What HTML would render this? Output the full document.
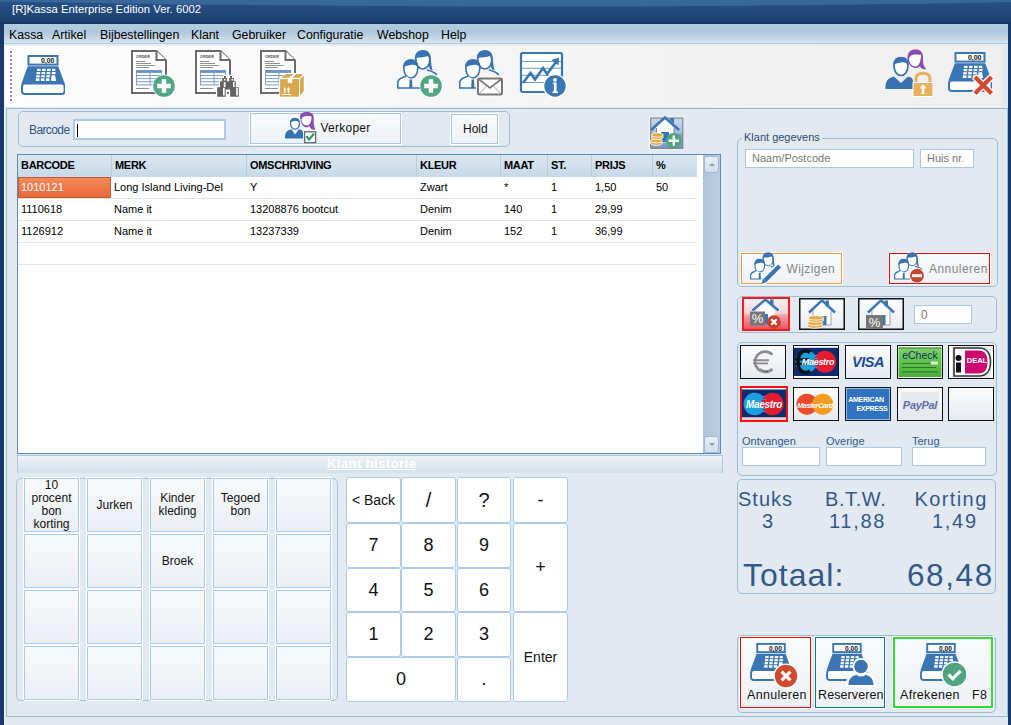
<!DOCTYPE html>
<html><head><meta charset="utf-8">
<style>
*{box-sizing:border-box;margin:0;padding:0}
html,body{width:1011px;height:725px;overflow:hidden;background:#e3e9f1;font-family:"Liberation Sans",sans-serif;position:relative}
.a{position:absolute}
#title{left:0;top:0;width:1011px;height:24px;background:linear-gradient(#28548a 0,#234b7e 8px,#1d4171 21px,#173a6a 23px,#12336a 24px)}
#title span{position:absolute;left:12px;top:3px;color:#fff;font-size:11.3px;}
#lb{left:0;top:24px;width:4px;height:701px;background:#18396a}
#rb{left:1008px;top:24px;width:3px;height:701px;background:#18396a}
#menu{left:4px;top:24px;width:1004px;height:20px;background:linear-gradient(#b3cbdf,#adc7dc 40%,#d5e4ee);border-bottom:1px solid #b2cbdb}
.mi{position:absolute;top:3.6px;font-size:12.3px;color:#000}
#tool{left:4px;top:44px;width:1004px;height:64px;background:linear-gradient(#e6ecf3 0,#e6ecf3 2px,transparent 2px),linear-gradient(90deg,#fdfdfd,#f4f4f4 60%,#efefef 998px,#e3e9f1 998px)}
#tline{left:5px;top:107px;width:1003px;height:1px;background:#e3e9f1}
#wl{left:4px;top:44px;width:1px;height:681px;background:#eef3f8}
#main{left:6px;top:108px;width:1002px;height:609px;border-left:1px solid #93bccc;border-top:1px solid #93bccc;border-bottom:1px solid #93bccc;border-right:1px solid #9ec0d2;background:#e3e9f1}
.grp{position:absolute;border:1px solid #9cbcd6;border-radius:5px}
.btn{position:absolute;background:linear-gradient(#f9fafc,#eef2f6);border:1px solid #a9c8e8;box-shadow:0 0 0 1px #fff}
.kp{position:absolute;background:#fff;border:1px solid #abcaec;border-radius:3px;font-size:18px;color:#111;display:flex;align-items:center;justify-content:center}
.pb{position:absolute;border:1.5px solid #111;background:linear-gradient(#fbfcfd,#e6eaf0)}
.tb{position:absolute;background:#fff;border:1px solid #a9c8e6}
#grid{left:17px;top:154px;width:704px;height:300px;background:#fff;border:1px solid #5a8bbf}
.hd{position:absolute;top:0;height:22px;background:linear-gradient(#dbe7f1,#c7d9e8);border-right:1px solid #b5cde0;font-size:11px;font-weight:bold;padding:4.3px 0 0 3px;letter-spacing:-0.3px;color:#000}
.rw{position:absolute;left:0;width:678px;height:22px;border-bottom:1px solid #dde6ee}
.c{position:absolute;top:4.3px;font-size:11px;color:#000;white-space:nowrap}
.gb{position:absolute;background:linear-gradient(#f9fafc,#eaeff4);border:1px solid #a8caee;box-shadow:0 0 0 1px #fff;font-size:12px;color:#111;display:flex;align-items:center;justify-content:center;text-align:center;line-height:13px;border-radius:1px}
</style></head><body>
<div id="title" class="a"><svg class="a" style="left:0;top:0" width="1011" height="12"><path d="M0,0 H1011 V2 Q550,11.3 0,1.5 Z" fill="#386898"/></svg><span>[R]Kassa Enterprise Edition Ver. 6002</span></div>
<div id="menu" class="a">
<span class="mi" style="left:5px">Kassa</span>
<span class="mi" style="left:48px">Artikel</span>
<span class="mi" style="left:96px">Bijbestellingen</span>
<span class="mi" style="left:187px">Klant</span>
<span class="mi" style="left:228px">Gebruiker</span>
<span class="mi" style="left:293px">Configuratie</span>
<span class="mi" style="left:373px">Webshop</span>
<span class="mi" style="left:437px">Help</span>
</div>
<div id="tool" class="a"></div>
<div id="tline" class="a"></div>
<div id="wl" class="a"></div>
<div id="main" class="a"></div>
<div id="lb" class="a"></div>
<div id="rb" class="a"></div>

<!-- barcode panel -->
<div class="grp" style="left:18px;top:111px;width:492px;height:36px;"></div>
<span class="a" style="left:29px;top:122.5px;font-size:12px;letter-spacing:-0.6px;color:#2d5a85">Barcode</span>
<div class="tb" style="left:73px;top:119px;width:153px;height:21px;border:2px solid #a9c9ec"><div class="a" style="left:2px;top:3px;width:1px;height:13px;background:#000"></div></div>
<div class="btn" style="left:250px;top:113px;width:151px;height:31px;"></div>
<span class="a" style="left:320.5px;top:121px;font-size:12px;letter-spacing:0.25px;color:#111">Verkoper</span>
<div class="btn" style="left:451px;top:114px;width:47px;height:30px;"></div>
<span class="a" style="left:463px;top:122px;font-size:12px;color:#111">Hold</span>

<!-- grid -->
<div id="grid" class="a">
 <div class="hd" style="left:0;width:94px">BARCODE</div>
 <div class="hd" style="left:94px;width:135px">MERK</div>
 <div class="hd" style="left:229px;width:170px">OMSCHRIJVING</div>
 <div class="hd" style="left:399px;width:84px">KLEUR</div>
 <div class="hd" style="left:483px;width:47px">MAAT</div>
 <div class="hd" style="left:530px;width:44px">ST.</div>
 <div class="hd" style="left:574px;width:61px">PRIJS</div>
 <div class="hd" style="left:635px;width:44px;border-right:0">%</div>
 <div class="rw" style="top:22px"><div class="a" style="left:0;top:0;width:93px;height:21px;background:linear-gradient(#f58a5a,#e8693a);border:1px solid #c9582e"></div>
   <span class="c" style="left:3px;color:#fff">1010121</span><span class="c" style="left:96px">Long Island Living-Del</span><span class="c" style="left:232px">Y</span><span class="c" style="left:402px">Zwart</span><span class="c" style="left:486px">*</span><span class="c" style="left:533px">1</span><span class="c" style="left:577px">1,50</span><span class="c" style="left:638px">50</span></div>
 <div class="rw" style="top:44px"><span class="c" style="left:3px">1110618</span><span class="c" style="left:96px">Name it</span><span class="c" style="left:232px">13208876 bootcut</span><span class="c" style="left:402px">Denim</span><span class="c" style="left:486px">140</span><span class="c" style="left:533px">1</span><span class="c" style="left:577px">29,99</span></div>
 <div class="rw" style="top:66px"><span class="c" style="left:3px">1126912</span><span class="c" style="left:96px">Name it</span><span class="c" style="left:232px">13237339</span><span class="c" style="left:402px">Denim</span><span class="c" style="left:486px">152</span><span class="c" style="left:533px">1</span><span class="c" style="left:577px">36,99</span></div>
 <div class="rw" style="top:88px"></div>
 <div class="a" style="left:685px;top:0;width:17px;height:298px;background:linear-gradient(90deg,#adc3d8,#bdd0e0)"></div>
 <div class="a" style="left:686px;top:1px;width:15px;height:17px;border:1px solid #9cb8d2;border-radius:3px;background:linear-gradient(#e9eff5,#d2dfea)"><div class="a" style="left:3.5px;top:6px;width:0;height:0;border-left:3.5px solid transparent;border-right:3.5px solid transparent;border-bottom:3.5px solid #7f9dbd"></div></div>
 <div class="a" style="left:686px;top:281px;width:15px;height:17px;border:1px solid #9cb8d2;border-radius:3px;background:linear-gradient(#e9eff5,#d2dfea)"><div class="a" style="left:3.5px;top:6px;width:0;height:0;border-left:3.5px solid transparent;border-right:3.5px solid transparent;border-top:3.5px solid #7f9dbd"></div></div>
</div>
<div class="a" style="left:17px;top:455px;width:706px;height:18px;background:linear-gradient(#eef3f7,#d2e1eb);border:1px solid #a9c8dc;border-bottom:0"></div>
<span class="a" style="left:327px;top:456px;font-size:13px;font-weight:bold;letter-spacing:0.45px;color:#fff;text-decoration:underline">Klant historie</span>

<!-- article buttons -->
<div class="grp" style="left:16px;top:478px;width:322px;height:223px;border-color:#a8c2d8"></div>
<div class="gb" style="left:24px;top:478px;width:55px;height:54px">10<br>procent<br>bon<br>korting</div>
<div class="gb" style="left:87px;top:478px;width:55px;height:54px">Jurken</div>
<div class="gb" style="left:150px;top:478px;width:55px;height:54px">Kinder<br>kleding</div>
<div class="gb" style="left:213px;top:478px;width:55px;height:54px">Tegoed<br>bon</div>
<div class="gb" style="left:276px;top:478px;width:55px;height:54px"></div>
<div class="gb" style="left:24px;top:534px;width:55px;height:54px"></div>
<div class="gb" style="left:87px;top:534px;width:55px;height:54px"></div>
<div class="gb" style="left:150px;top:534px;width:55px;height:54px">Broek</div>
<div class="gb" style="left:213px;top:534px;width:55px;height:54px"></div>
<div class="gb" style="left:276px;top:534px;width:55px;height:54px"></div>
<div class="gb" style="left:24px;top:590px;width:55px;height:54px"></div>
<div class="gb" style="left:87px;top:590px;width:55px;height:54px"></div>
<div class="gb" style="left:150px;top:590px;width:55px;height:54px"></div>
<div class="gb" style="left:213px;top:590px;width:55px;height:54px"></div>
<div class="gb" style="left:276px;top:590px;width:55px;height:54px"></div>
<div class="gb" style="left:24px;top:646px;width:55px;height:54px"></div>
<div class="gb" style="left:87px;top:646px;width:55px;height:54px"></div>
<div class="gb" style="left:150px;top:646px;width:55px;height:54px"></div>
<div class="gb" style="left:213px;top:646px;width:55px;height:54px"></div>
<div class="gb" style="left:276px;top:646px;width:55px;height:54px"></div>
<div class="kp" style="left:346px;top:477px;width:55px;height:46px;font-size:14px">&lt; Back</div>
<div class="kp" style="left:401px;top:477px;width:55px;height:46px;font-size:20px">/</div>
<div class="kp" style="left:457px;top:477px;width:54px;height:46px;font-size:20px">?</div>
<div class="kp" style="left:513px;top:477px;width:55px;height:46px">-</div>
<div class="kp" style="left:346px;top:523px;width:55px;height:45px">7</div>
<div class="kp" style="left:401px;top:523px;width:55px;height:45px">8</div>
<div class="kp" style="left:457px;top:523px;width:54px;height:45px">9</div>
<div class="kp" style="left:513px;top:523px;width:55px;height:89px">+</div>
<div class="kp" style="left:346px;top:568px;width:55px;height:44px">4</div>
<div class="kp" style="left:401px;top:568px;width:55px;height:44px">5</div>
<div class="kp" style="left:457px;top:568px;width:54px;height:44px">6</div>
<div class="kp" style="left:346px;top:612px;width:55px;height:45px">1</div>
<div class="kp" style="left:401px;top:612px;width:55px;height:45px">2</div>
<div class="kp" style="left:457px;top:612px;width:54px;height:45px">3</div>
<div class="kp" style="left:513px;top:612px;width:55px;height:90px;font-size:14px">Enter</div>
<div class="kp" style="left:346px;top:657px;width:110px;height:45px">0</div>
<div class="kp" style="left:457px;top:657px;width:54px;height:45px">.</div>
<!-- right panel -->
<div class="grp" style="left:737px;top:138px;width:261px;height:149px;"></div>
<span class="a" style="left:742px;top:131px;padding:0 2px;background:#e3e9f1;font-size:11px;color:#2d4d70">Klant gegevens</span>
<div class="tb" style="left:745px;top:149px;width:169px;height:19px;"><span class="a" style="left:6px;top:2px;font-size:11px;color:#777">Naam/Postcode</span></div>
<div class="tb" style="left:920px;top:149px;width:54px;height:19px;"><span class="a" style="left:6px;top:2px;font-size:11px;color:#777">Huis nr.</span></div>
<div class="btn" style="left:741px;top:253px;width:101px;height:31px;border-color:#f0a040"></div>
<span class="a" style="left:786.5px;top:261.5px;font-size:12px;letter-spacing:0.4px;color:#858585">Wijzigen</span>
<div class="btn" style="left:889px;top:253px;width:101px;height:31px;border-color:#ff0000"></div>
<span class="a" style="left:929px;top:261.5px;font-size:12px;color:#858585;letter-spacing:0.45px">Annuleren</span>

<div class="grp" style="left:737px;top:296px;width:260px;height:37px;"></div>
<div class="tb" style="left:914px;top:305px;width:58px;height:19px;"><span class="a" style="left:6px;top:2px;font-size:12px;color:#777">0</span></div>

<div class="grp" style="left:737px;top:342px;width:260px;height:134px;"></div>
<span class="a" style="left:742px;top:435px;font-size:11px;color:#2d5a85">Ontvangen</span>
<span class="a" style="left:826px;top:435px;font-size:11px;color:#2d5a85">Overige</span>
<span class="a" style="left:912px;top:435px;font-size:11px;color:#2d5a85">Terug</span>
<div class="tb" style="left:742px;top:447px;width:78px;height:19px;"></div>
<div class="tb" style="left:826px;top:447px;width:76px;height:19px;"></div>
<div class="tb" style="left:912px;top:447px;width:74px;height:19px;"></div>

<div class="grp" style="left:737px;top:479px;width:259px;height:115px;"></div>
<span class="a" style="left:738px;top:487.5px;font-size:20px;letter-spacing:1px;color:#33598a">Stuks</span>
<span class="a" style="left:762px;top:510px;font-size:20px;color:#33598a">3</span>
<span class="a" style="left:825px;top:487.5px;font-size:20px;letter-spacing:0.6px;color:#33598a">B.T.W.</span>
<span class="a" style="left:829px;top:510px;font-size:20px;letter-spacing:1.7px;color:#33598a">11,88</span>
<span class="a" style="left:914.5px;top:487.5px;font-size:20px;letter-spacing:1.4px;color:#33598a">Korting</span>
<span class="a" style="left:932px;top:510px;font-size:20px;letter-spacing:1.7px;color:#33598a">1,49</span>
<span class="a" style="left:743px;top:557px;font-size:32px;letter-spacing:1px;color:#31598a">Totaal:</span>
<span class="a" style="left:907px;top:556.5px;font-size:31.5px;letter-spacing:1.6px;color:#31598a">68,48</span>

<div class="grp" style="left:737px;top:635px;width:259px;height:78px;"></div>
<div class="btn" style="left:740px;top:637px;width:71px;height:71px;border-color:#ff0000"></div>
<div class="btn" style="left:815px;top:637px;width:70px;height:71px;border-color:#0b7b7b"></div>
<div class="btn" style="left:893px;top:637px;width:100px;height:71px;border-color:#30e030;border-width:2px"></div>
<span class="a" style="left:747px;top:688px;font-size:12.5px;letter-spacing:0.3px;color:#111">Annuleren</span>
<span class="a" style="left:818px;top:688px;font-size:12.5px;letter-spacing:0.1px;color:#111">Reserveren</span>
<span class="a" style="left:900px;top:688px;font-size:12.5px;letter-spacing:0.3px;color:#111">Afrekenen</span><span class="a" style="left:972px;top:688px;font-size:12.5px;letter-spacing:0.3px;color:#111">F8</span>


<!-- toolbar -->
<div class="a" style="left:10px;top:51px;width:2px;height:50px;background:repeating-linear-gradient(#8a8a8a 0 2px,transparent 2px 4px)"></div>
<svg class="a" style="left:21px;top:55px" width="44" height="40" viewBox="0 0 44 40">
  <rect x="7.5" y="1" width="29" height="8.6" fill="#fff" stroke="#3a76b4" stroke-width="2"/>
  <text x="33.5" y="8" font-family="Liberation Sans" font-weight="bold" font-size="7" text-anchor="end" fill="#111">0,00</text>
  <polygon points="6.8,11.2 37.2,11.2 43.8,28.8 0.4,28.8" fill="#3a76b4"/>
  <rect x="1" y="28.6" width="42.6" height="10.4" rx="3" fill="#fff" stroke="#3a76b4" stroke-width="2"/>
  <g fill="#fff">
   <rect x="16" y="13.8" width="3.6" height="2.2"/><rect x="21" y="13.8" width="3.6" height="2.2"/><rect x="26" y="13.8" width="3.6" height="2.2"/><rect x="31" y="13.8" width="3.4" height="2.2"/>
   <rect x="15.6" y="17" width="3.6" height="2.2"/><rect x="20.6" y="17" width="3.6" height="2.2"/><rect x="25.6" y="17" width="3.6" height="2.2"/><rect x="30.8" y="17" width="3.8" height="2.2"/>
   <rect x="15.2" y="20.2" width="3.6" height="2.2"/><rect x="20.2" y="20.2" width="3.6" height="2.2"/><rect x="25.2" y="20.2" width="3.6" height="2.2"/>
   <rect x="14.8" y="23.4" width="3.6" height="2.6"/><rect x="19.8" y="23.4" width="3.6" height="2.6"/><rect x="24.8" y="23.4" width="3.6" height="2.6"/>
   <polygon points="30.4,20.2 34,20.2 35.2,26 30.2,26"/>
  </g>
 </svg>
<svg class="a" style="left:131px;top:50px" width="36" height="44" viewBox="0 0 36 44">
  <path d="M1,1 H25.5 L35,10.5 V43 H1 Z" fill="#fff" stroke="#6b6b6b" stroke-width="2"/>
  <path d="M25.5,1 V10 H35" fill="#fff" stroke="#6b6b6b" stroke-width="2"/>
  <text x="5" y="8" font-family="Liberation Sans" font-weight="bold" font-size="3.6" fill="#444" letter-spacing="0.2">ORDER</text>
  <g fill="#8f8f8f"><rect x="5" y="11" width="9" height="1"/><rect x="5" y="13" width="15" height="1"/><rect x="5" y="15" width="19" height="1"/><rect x="5" y="17" width="13" height="1"/><rect x="5" y="38" width="13" height="1"/></g>
  <rect x="5" y="20" width="26" height="2.6" fill="#6f93c3"/>
  <g fill="none" stroke="#7096c6" stroke-width="0.9"><rect x="5.4" y="22.4" width="25" height="12.5"/><path d="M5.4,25.5 H30.4 M5.4,28.6 H30.4 M5.4,31.7 H30.4 M19,22.4 V34.9"/></g>
 </svg>
<svg class="a" style="left:152px;top:74px" width="24" height="24" viewBox="0 0 24 24">
  <circle cx="12" cy="12" r="11.5" fill="#fff"/>
  <circle cx="12" cy="12" r="10.8" fill="#52a681"/>
  <path d="M9.8,5.2 H14.2 V9.8 H18.8 V14.2 H14.2 V18.8 H9.8 V14.2 H5.2 V9.8 H9.8 Z" fill="#fff"/>
 </svg>
<svg class="a" style="left:195px;top:50px" width="36" height="44" viewBox="0 0 36 44">
  <path d="M1,1 H25.5 L35,10.5 V43 H1 Z" fill="#fff" stroke="#6b6b6b" stroke-width="2"/>
  <path d="M25.5,1 V10 H35" fill="#fff" stroke="#6b6b6b" stroke-width="2"/>
  <text x="5" y="8" font-family="Liberation Sans" font-weight="bold" font-size="3.6" fill="#444" letter-spacing="0.2">ORDER</text>
  <g fill="#8f8f8f"><rect x="5" y="11" width="9" height="1"/><rect x="5" y="13" width="15" height="1"/><rect x="5" y="15" width="19" height="1"/><rect x="5" y="17" width="13" height="1"/><rect x="5" y="38" width="13" height="1"/></g>
  <rect x="5" y="20" width="26" height="2.6" fill="#6f93c3"/>
  <g fill="none" stroke="#7096c6" stroke-width="0.9"><rect x="5.4" y="22.4" width="25" height="12.5"/><path d="M5.4,25.5 H30.4 M5.4,28.6 H30.4 M5.4,31.7 H30.4 M19,22.4 V34.9"/></g>
 </svg>
<svg class="a" style="left:214px;top:73px" width="28" height="26" viewBox="0 0 28 26">
 <path d="M3.2,23.7 V14.25 H6.1 V8.3 H8.2 V5 H10 V3 H11.9 V5 H12.9 V8.3 H15.2 V5 H16 V3 H18 V5 H19.8 V8.3 H21.7 V14.25 H24.8 V23.7 H16.1 V16.6 H11.7 V23.7 Z" fill="#fff" stroke="#fff" stroke-width="2.4"/>
 <path d="M3.2,23.7 V14.25 H6.1 V8.3 H8.2 V5 H10 V3 H11.9 V5 H12.9 V8.3 H15.2 V5 H16 V3 H18 V5 H19.8 V8.3 H21.7 V14.25 H24.8 V23.7 H16.1 V16.6 H11.7 V23.7 Z" fill="#626262"/>
 <g fill="#fff"><rect x="9" y="14.8" width="1.7" height="7.7"/><rect x="9.8" y="9" width="1.7" height="5"/><rect x="10" y="6" width="1.5" height="1.5"/><rect x="22.1" y="14.8" width="1.7" height="7.7"/><rect x="19" y="9" width="1.5" height="5"/><rect x="17.5" y="6" width="1.5" height="1.5"/></g>
</svg>
<svg class="a" style="left:260px;top:50px" width="36" height="44" viewBox="0 0 36 44">
  <path d="M1,1 H25.5 L35,10.5 V43 H1 Z" fill="#fff" stroke="#6b6b6b" stroke-width="2"/>
  <path d="M25.5,1 V10 H35" fill="#fff" stroke="#6b6b6b" stroke-width="2"/>
  <text x="5" y="8" font-family="Liberation Sans" font-weight="bold" font-size="3.6" fill="#444" letter-spacing="0.2">ORDER</text>
  <g fill="#8f8f8f"><rect x="5" y="11" width="9" height="1"/><rect x="5" y="13" width="15" height="1"/><rect x="5" y="15" width="19" height="1"/><rect x="5" y="17" width="13" height="1"/><rect x="5" y="38" width="13" height="1"/></g>
  <rect x="5" y="20" width="26" height="2.6" fill="#6f93c3"/>
  <g fill="none" stroke="#7096c6" stroke-width="0.9"><rect x="5.4" y="22.4" width="25" height="12.5"/><path d="M5.4,25.5 H30.4 M5.4,28.6 H30.4 M5.4,31.7 H30.4 M19,22.4 V34.9"/></g>
 </svg>
<svg class="a" style="left:278px;top:72px" width="28" height="26" viewBox="0 0 28 26">
 <path d="M1.2,24.8 V6.6 L7.5,1 H26.5 V19.5 L22,25.5 Z" fill="#fff"/>
 <g fill="#d9a84e">
 <rect x="2.1" y="7.1" width="18.9" height="17.6"/>
 <polygon points="2.6,5.7 8,2 15.4,2 10.9,5.7"/>
 <polygon points="15,5.7 17.9,2 24.9,2 22,5.7"/>
 <polygon points="22,7.1 25.8,3.5 25.8,19 22,24"/>
 </g>
 <rect x="9.8" y="7" width="4.4" height="3.9" fill="#fff"/>
 <g fill="#fff"><path d="M5,17.5 L6.7,15 L8.4,17.5 H7.4 V21 H6 V17.5 Z"/><path d="M8.8,17.5 L10.5,15 L12.2,17.5 H11.2 V21 H9.8 V17.5 Z"/><rect x="4" y="22" width="9" height="1"/></g>
</svg>
<svg class="a" style="left:394px;top:48px" width="50" height="50" viewBox="0 0 50 50">
 <g transform="translate(13.8,2)">
  <path d="M8,9 C8,3 11,1 15,1 C19,1 22,3 22,9 C22,15 19,19 15,19 C11,19 8,15 8,9 Z" fill="#fff" stroke="#3772b2" stroke-width="1.6"/>
  <path d="M7,10 C6.5,3 10.5,0.3 15,0.3 C20,0.3 23,3.5 23,9 C23.5,14 24,19 25,20 C23,20.5 21.5,19 21,16 C22,12 21.5,8 20,6 C17,7.5 12,7.5 9,7.8 Z" fill="#3772b2"/>
  <path d="M19,20 C24,21 27,22 29,25" fill="none" stroke="#3772b2" stroke-width="1.6"/>
 </g>
 <g transform="translate(2.8,11)">
  <path d="M7,9 C7,3 10,1 14,1 C18,1 21,3 21,9 C21,15 18,19 14,19 C10,19 7,15 7,9 Z" fill="#fff" stroke="#3772b2" stroke-width="1.6"/>
  <path d="M6.4,9 C6,3 10,0.5 14,0.5 C18,0.5 22,3 21.6,9 C20,6 17,5.5 14,6 C10,6.5 8,7 6.4,9 Z" fill="#3772b2"/>
  <path d="M9.5,17 C5,19 1.5,19.5 1,23 V29 H27" fill="#fff" stroke="#3772b2" stroke-width="1.6"/>
  <path d="M12.8,20.5 H15.2 L15.6,29 H12.4 Z" fill="#3772b2"/>
 </g>
</svg>
<svg class="a" style="left:419px;top:74px" width="24" height="24" viewBox="0 0 24 24">
  <circle cx="12" cy="12" r="11.5" fill="#fff"/>
  <circle cx="12" cy="12" r="10.8" fill="#52a681"/>
  <path d="M9.8,5.2 H14.2 V9.8 H18.8 V14.2 H14.2 V18.8 H9.8 V14.2 H5.2 V9.8 H9.8 Z" fill="#fff"/>
 </svg>
<svg class="a" style="left:456px;top:48px" width="50" height="50" viewBox="0 0 50 50">
 <g transform="translate(13.8,2)">
  <path d="M8,9 C8,3 11,1 15,1 C19,1 22,3 22,9 C22,15 19,19 15,19 C11,19 8,15 8,9 Z" fill="#fff" stroke="#3772b2" stroke-width="1.6"/>
  <path d="M7,10 C6.5,3 10.5,0.3 15,0.3 C20,0.3 23,3.5 23,9 C23.5,14 24,19 25,20 C23,20.5 21.5,19 21,16 C22,12 21.5,8 20,6 C17,7.5 12,7.5 9,7.8 Z" fill="#3772b2"/>
  <path d="M19,20 C24,21 27,22 29,25" fill="none" stroke="#3772b2" stroke-width="1.6"/>
 </g>
 <g transform="translate(2.8,11)">
  <path d="M7,9 C7,3 10,1 14,1 C18,1 21,3 21,9 C21,15 18,19 14,19 C10,19 7,15 7,9 Z" fill="#fff" stroke="#3772b2" stroke-width="1.6"/>
  <path d="M6.4,9 C6,3 10,0.5 14,0.5 C18,0.5 22,3 21.6,9 C20,6 17,5.5 14,6 C10,6.5 8,7 6.4,9 Z" fill="#3772b2"/>
  <path d="M9.5,17 C5,19 1.5,19.5 1,23 V29 H27" fill="#fff" stroke="#3772b2" stroke-width="1.6"/>
  <path d="M12.8,20.5 H15.2 L15.6,29 H12.4 Z" fill="#3772b2"/>
 </g>
 <rect x="21.5" y="30" width="25" height="17" rx="1.5" fill="#fff" stroke="#fff" stroke-width="3"/>
 <rect x="22" y="30.5" width="24" height="16" rx="1.5" fill="#fff" stroke="#777" stroke-width="2"/>
 <path d="M22.5,31 L34,40 L45.5,31" fill="none" stroke="#777" stroke-width="1.6"/>
 <path d="M23,46 L30,38.5 M45,46 L38,38.5" fill="none" stroke="#888" stroke-width="0.8"/>
</svg>
<svg class="a" style="left:519px;top:51px" width="50" height="48" viewBox="0 0 50 48">
 <rect x="2" y="2" width="41" height="39" rx="1.5" fill="#fff" stroke="#3a76b4" stroke-width="2.2"/>
 <g fill="#5d8fc4"><rect x="3" y="10" width="39" height="0.9"/><rect x="3" y="16.8" width="39" height="0.9"/><rect x="3" y="23.8" width="39" height="0.9"/><rect x="3" y="31" width="39" height="0.9"/></g>
 <path d="M4,32 L11.5,22 L16,28.5 L24,17 L28,23 L37,11" fill="none" stroke="#3a76b4" stroke-width="2.6" stroke-linejoin="miter"/>
 <path d="M32.5,9 L40,6.5 L39.5,14.5 Z" fill="#3a76b4"/>
 <circle cx="36" cy="35" r="12" fill="#fff"/>
 <circle cx="36" cy="35" r="10.7" fill="#3a76b4"/>
 <circle cx="36" cy="28.8" r="1.9" fill="#fff"/>
 <path d="M34,31.5 H37.6 V40.5 H39 V42 H33.5 V40.5 H34.8 V33 H34 Z" fill="#fff"/>
</svg>
<svg class="a" style="left:884px;top:48px" width="52" height="50" viewBox="0 0 52 50">
 <g transform="translate(-2.5,0)">
 <path d="M26,12 C25.5,4 29,1.5 34,1.5 C39,1.5 42,4 41.5,11 C41.5,15 42,19 45,21 C41,22 39,20 38.5,18 C37,19.5 35.5,20 34,20 C30,20 27,16 26,12 Z" fill="#8a4cb0"/>
 <path d="M27.5,11 C28,8 30,7 33,6.5 C36,6.5 38.5,6 39.5,7 C39.5,13 37.5,18.5 34,18.5 C30.5,18.5 27.5,15 27.5,11 Z" fill="#fff"/>
 </g>
 <g transform="translate(0,6.5)">
 <path d="M10,11 C10,5 13,3 17,3 C21,3 24,5 24,11 C24,17 21,21 17,21 C13,21 10,17 10,11 Z" fill="#fff" stroke="#3772b2" stroke-width="1.7"/>
 <path d="M9.5,11 C9,5 13,2.5 17,2.5 C21,2.5 25,5 24.5,11 C23,8 20,7.5 17,8 C13,8.5 11,9 9.5,11 Z" fill="#3772b2"/>
 </g>
 <path d="M1.5,41 C1,33 4,30 10,28.5 L17,35 L24,28.5 C28,29.5 29,31 29,33 V41 Z" fill="#3772b2"/>
 <path d="M32,35 V31 C32,27 35,25.3 39,25.3 C43,25.3 46,27 46,31 V35" fill="none" stroke="#e8b05c" stroke-width="3"/>
 <rect x="29" y="34.5" width="20" height="14" fill="#e8b05c" stroke="#fff" stroke-width="1"/>
 <path d="M39,37 C40.5,37 41.5,38 41.5,39.3 C41.5,40.3 40.8,41.1 40,41.5 L40.6,46 H37.4 L38,41.5 C37.2,41.1 36.5,40.3 36.5,39.3 C36.5,38 37.5,37 39,37 Z" fill="#fff"/>
</svg>
<svg class="a" style="left:948px;top:52px" width="44" height="40" viewBox="0 0 44 40">
  <rect x="7.5" y="1" width="29" height="8.6" fill="#fff" stroke="#3a76b4" stroke-width="2"/>
  <text x="33.5" y="8" font-family="Liberation Sans" font-weight="bold" font-size="7" text-anchor="end" fill="#111">0,00</text>
  <polygon points="6.8,11.2 37.2,11.2 43.8,28.8 0.4,28.8" fill="#3a76b4"/>
  <rect x="1" y="28.6" width="42.6" height="10.4" rx="3" fill="#fff" stroke="#3a76b4" stroke-width="2"/>
  <g fill="#fff">
   <rect x="16" y="13.8" width="3.6" height="2.2"/><rect x="21" y="13.8" width="3.6" height="2.2"/><rect x="26" y="13.8" width="3.6" height="2.2"/><rect x="31" y="13.8" width="3.4" height="2.2"/>
   <rect x="15.6" y="17" width="3.6" height="2.2"/><rect x="20.6" y="17" width="3.6" height="2.2"/><rect x="25.6" y="17" width="3.6" height="2.2"/><rect x="30.8" y="17" width="3.8" height="2.2"/>
   <rect x="15.2" y="20.2" width="3.6" height="2.2"/><rect x="20.2" y="20.2" width="3.6" height="2.2"/><rect x="25.2" y="20.2" width="3.6" height="2.2"/>
   <rect x="14.8" y="23.4" width="3.6" height="2.6"/><rect x="19.8" y="23.4" width="3.6" height="2.6"/><rect x="24.8" y="23.4" width="3.6" height="2.6"/>
   <polygon points="30.4,20.2 34,20.2 35.2,26 30.2,26"/>
  </g>
 </svg>
<svg class="a" style="left:971px;top:73px" width="24" height="24" viewBox="0 0 24 24">
 <path d="M3.5,3.5 L21,21 M21,3.5 L3.5,21" stroke="#fff" stroke-width="6.8"/>
 <path d="M4,4 L20.5,20.5 M20.5,4 L4,20.5" stroke="#d5492c" stroke-width="4.4"/>
</svg>

<svg class="a" style="left:283px;top:110px" width="36" height="36" viewBox="0 0 36 36">
 <path d="M17,8 C16.5,3.5 19.5,2 24,2 C28.5,2 31,4 30.8,9 C30.5,13 31,16.5 32.3,19.8 C29,20.2 27,18.5 26.5,16 C25.5,17 24.5,17.3 23.5,17.3 C20,17.3 18,13 17.5,9 Z" fill="#8a4cb0"/>
 <path d="M18.5,9.5 C19,6.8 21,6.2 24,6 C26,6.2 28,6 28.5,6.8 C28.5,11.5 27,15.5 24,15.5 C21,15.5 18.5,12.5 18.5,9.5 Z" fill="#fff"/>
 <ellipse cx="12" cy="13.8" rx="4.5" ry="5.4" fill="#fff" stroke="#3772b2" stroke-width="1.3"/>
 <path d="M7.3,13 C7,9 9,8 12,8 C15,8 17,9 16.7,13 C15.5,11 14,10.8 12,11 C10,11.2 8.5,11.5 7.3,13 Z" fill="#3772b2"/>
 <path d="M2,28.6 C1.8,22.5 4,20.5 8.5,19.3 L12,24.5 L15.8,19.3 C19,20 20,21 20,23 V28.6 Z" fill="#3772b2"/>
 <rect x="21.6" y="21.8" width="11" height="10.8" fill="#fff" stroke="#6a6a6a" stroke-width="1.3"/>
 <path d="M23.4,26.2 L26,29.6 L31,23.8" fill="none" stroke="#2a9d63" stroke-width="2.2"/>
</svg>
<svg class="a" style="left:649px;top:116px" width="36" height="34" viewBox="0 0 36 34">
 <defs><linearGradient id="hg" x1="0" y1="0" x2="0" y2="1"><stop offset="0" stop-color="#c9d8ec"/><stop offset="0.5" stop-color="#a3bde0"/><stop offset="0.55" stop-color="#7f9fd0"/><stop offset="1" stop-color="#7d9ccc"/></linearGradient></defs>
 <rect x="0.5" y="0.8" width="34.5" height="32.5" fill="#fff"/>
 <rect x="1.7" y="2" width="32.2" height="30.3" fill="url(#hg)" stroke="#707070" stroke-width="1"/>
 <rect x="21" y="2" width="4" height="6" fill="#3a76b4"/>
 <path d="M6.5,12.5 H7.5 V26.5 H25 V12.5 H26.5 V9 L16.5,0.5 L6.5,9 Z" fill="#fff"/>
 <path d="M2,14 L16,1.5 L30,14" fill="none" stroke="#3a76b4" stroke-width="2.6"/>
 <path d="M7.5,12 V26.5 M25,12 V20" stroke="#666" stroke-width="0.8"/>
 <rect x="12" y="16" width="8" height="10" fill="#3a76b4"/>
 <g fill="#e9a94a" stroke="#fff" stroke-width="0.8"><ellipse cx="7.3" cy="27.2" rx="6" ry="2.2"/><ellipse cx="7.3" cy="24.7" rx="6" ry="2.2"/><ellipse cx="8.3" cy="21.2" rx="6" ry="2.2"/><ellipse cx="8.3" cy="19" rx="6" ry="2.2"/></g>
 <circle cx="24.8" cy="24.7" r="7.8" fill="#4fa57f"/>
 <path d="M23.6,19.6 H26 V23.5 H29.9 V25.9 H26 V29.8 H23.6 V25.9 H19.7 V23.5 H23.6 Z" fill="#fff"/>
</svg>
<!-- discount buttons -->
<svg class="a" style="left:742px;top:297px" width="48" height="34" viewBox="0 0 48 34">
 <defs><linearGradient id="rg" x1="0" y1="0" x2="0" y2="1"><stop offset="0" stop-color="#f8f2f4"/><stop offset="0.5" stop-color="#f0d2d8"/><stop offset="0.52" stop-color="#f0a8b0"/><stop offset="1" stop-color="#e8505e"/></linearGradient></defs>
 <rect x="1" y="1" width="46" height="32" fill="url(#rg)" stroke="#ff1a1a" stroke-width="2"/>
 <rect x="28" y="2.5" width="3.5" height="6" fill="#3a76b4"/>
 <path d="M14,13 V27 H33 V13 L23.5,4.5 Z" fill="#fff" opacity="0.9"/>
 <path d="M10.5,13.5 L23.5,2.5 L36.5,13.5" fill="none" stroke="#3a76b4" stroke-width="2.4"/>
 <rect x="20" y="17" width="6" height="10" fill="#3a76b4"/>
 <rect x="8" y="14.5" width="15" height="14" fill="#777"/>
 <text x="15.5" y="26" font-family="Liberation Sans" font-size="13" text-anchor="middle" fill="#fff">%</text>
 <circle cx="32" cy="25" r="6.8" fill="#c8412c"/>
 <path d="M29.3,22.3 L34.7,27.7 M34.7,22.3 L29.3,27.7" stroke="#fff" stroke-width="2.2"/>
</svg>
<svg class="a" style="left:799px;top:298px" width="46" height="32" viewBox="0 0 46 32">
 <defs><linearGradient id="wg" x1="0" y1="0" x2="0" y2="1"><stop offset="0" stop-color="#fafbfd"/><stop offset="1" stop-color="#e8ecf2"/></linearGradient></defs>
 <rect x="0.75" y="0.75" width="44.5" height="30.5" fill="url(#wg)" stroke="#111" stroke-width="1.5"/>
 <rect x="26.5" y="2.5" width="3.5" height="6" fill="#3a76b4"/>
 <path d="M14,13 V27 H32 V13 L23,4.5 Z" fill="#fff"/>
 <path d="M14,12.5 V27 H32 V12.5" fill="none" stroke="#888" stroke-width="0.8"/>
 <path d="M10,14.5 L23,2.3 L36,14.5" fill="none" stroke="#3a76b4" stroke-width="2.4"/>
 <rect x="21.5" y="18" width="6" height="9" fill="#3a76b4"/>
 <g fill="#e9a94a" stroke="#fff" stroke-width="0.8"><ellipse cx="16" cy="28" rx="8" ry="2.2"/><ellipse cx="16" cy="25.3" rx="8" ry="2.2"/><ellipse cx="17" cy="22" rx="8" ry="2.2"/><ellipse cx="17" cy="19.8" rx="8" ry="2.2"/></g>
</svg>
<svg class="a" style="left:858px;top:298px" width="46" height="32" viewBox="0 0 46 32">
 <rect x="0.75" y="0.75" width="44.5" height="30.5" fill="url(#wg)" stroke="#111" stroke-width="1.5"/>
 <rect x="26.5" y="2.5" width="3.5" height="6" fill="#3a76b4"/>
 <path d="M14,13 V27 H32 V13 L23,4.5 Z" fill="#fff"/>
 <path d="M14,12.5 V27 H32 V12.5" fill="none" stroke="#888" stroke-width="0.8"/>
 <path d="M10,14.5 L23,2.3 L36,14.5" fill="none" stroke="#3a76b4" stroke-width="2.4"/>
 <rect x="21.5" y="17" width="6" height="10" fill="#3a76b4"/>
 <rect x="8" y="17" width="17" height="13.5" fill="#777"/>
 <text x="16.5" y="28.5" font-family="Liberation Sans" font-size="13" text-anchor="middle" fill="#fff">%</text>
</svg>

<svg class="a" style="left:748px;top:250.5px" width="35" height="35" viewBox="0 0 50 50">
 <g transform="translate(13.8,2)">
  <path d="M8,9 C8,3 11,1 15,1 C19,1 22,3 22,9 C22,15 19,19 15,19 C11,19 8,15 8,9 Z" fill="#fff" stroke="#3772b2" stroke-width="1.6"/>
  <path d="M7,10 C6.5,3 10.5,0.3 15,0.3 C20,0.3 23,3.5 23,9 C23.5,14 24,19 25,20 C23,20.5 21.5,19 21,16 C22,12 21.5,8 20,6 C17,7.5 12,7.5 9,7.8 Z" fill="#3772b2"/>
  <path d="M19,20 C24,21 27,22 29,25" fill="none" stroke="#3772b2" stroke-width="1.6"/>
 </g>
 <g transform="translate(2.8,11)">
  <path d="M7,9 C7,3 10,1 14,1 C18,1 21,3 21,9 C21,15 18,19 14,19 C10,19 7,15 7,9 Z" fill="#fff" stroke="#3772b2" stroke-width="1.6"/>
  <path d="M6.4,9 C6,3 10,0.5 14,0.5 C18,0.5 22,3 21.6,9 C20,6 17,5.5 14,6 C10,6.5 8,7 6.4,9 Z" fill="#3772b2"/>
  <path d="M9.5,17 C5,19 1.5,19.5 1,23 V29 H27" fill="#fff" stroke="#3772b2" stroke-width="1.6"/>
  <path d="M12.8,20.5 H15.2 L15.6,29 H12.4 Z" fill="#3772b2"/>
 </g>
</svg>
<svg class="a" style="left:758px;top:262px" width="26" height="24" viewBox="0 0 26 24">
 <path d="M4.5,21 L20.5,5" stroke="#fff" stroke-width="7"/>
 <path d="M7,18.5 L21.5,4" stroke="#3772b2" stroke-width="4.2"/>
 <path d="M3.6,21.6 L5,16.4 L8.8,20.2 Z" fill="#3772b2"/>
</svg>
<svg class="a" style="left:892px;top:250.5px" width="35" height="35" viewBox="0 0 50 50">
 <g transform="translate(13.8,2)">
  <path d="M8,9 C8,3 11,1 15,1 C19,1 22,3 22,9 C22,15 19,19 15,19 C11,19 8,15 8,9 Z" fill="#fff" stroke="#3772b2" stroke-width="1.6"/>
  <path d="M7,10 C6.5,3 10.5,0.3 15,0.3 C20,0.3 23,3.5 23,9 C23.5,14 24,19 25,20 C23,20.5 21.5,19 21,16 C22,12 21.5,8 20,6 C17,7.5 12,7.5 9,7.8 Z" fill="#3772b2"/>
  <path d="M19,20 C24,21 27,22 29,25" fill="none" stroke="#3772b2" stroke-width="1.6"/>
 </g>
 <g transform="translate(2.8,11)">
  <path d="M7,9 C7,3 10,1 14,1 C18,1 21,3 21,9 C21,15 18,19 14,19 C10,19 7,15 7,9 Z" fill="#fff" stroke="#3772b2" stroke-width="1.6"/>
  <path d="M6.4,9 C6,3 10,0.5 14,0.5 C18,0.5 22,3 21.6,9 C20,6 17,5.5 14,6 C10,6.5 8,7 6.4,9 Z" fill="#3772b2"/>
  <path d="M9.5,17 C5,19 1.5,19.5 1,23 V29 H27" fill="#fff" stroke="#3772b2" stroke-width="1.6"/>
  <path d="M12.8,20.5 H15.2 L15.6,29 H12.4 Z" fill="#3772b2"/>
 </g>
</svg>
<svg class="a" style="left:909px;top:268px" width="16" height="16" viewBox="0 0 16 16">
 <circle cx="8" cy="7.7" r="7.6" fill="#fff"/>
 <circle cx="8" cy="7.7" r="6.9" fill="#c8442c"/>
 <rect x="3" y="6.2" width="10" height="3" fill="#fff"/>
</svg>

<!-- payment buttons -->
<div class="pb" style="left:740px;top:345px;width:46px;height:34px"></div>
<svg class="a" style="left:750px;top:349px" width="26" height="26" viewBox="0 0 26 26">
 <path d="M22.4,5.6 A10.2,10.2 0 1 0 22.4,20" fill="none" stroke="#8c8c8c" stroke-width="2.6"/>
 <path d="M10.5,19.5 A8.2,8.2 0 0 0 18,22" fill="none" stroke="#333" stroke-width="1.1" opacity="0.6"/>
 <path d="M3,11.3 H19 M3,14.4 H18" stroke="#8c8c8c" stroke-width="1.9"/>
</svg>
<div class="pb" style="left:793px;top:345px;width:46px;height:34px;background:#fff"></div>
<svg class="a" style="left:794px;top:347px" width="44" height="30" viewBox="0 0 44 30">
 <rect x="0" y="0.8" width="44" height="28.2" fill="#0b2a6f"/>
 <circle cx="12.4" cy="14.7" r="11" fill="#1ba0dd"/>
 <circle cx="31" cy="14.7" r="11" fill="#e31c30"/>
 <g fill="#1ba0dd"><rect x="20" y="8" width="3.5" height="1"/><rect x="20" y="11" width="4" height="1"/><rect x="20" y="17" width="4" height="1"/><rect x="20" y="20" width="3.5" height="1"/></g>
 <path d="M16,5.5 C14.5,4.5 13,4 11.5,4 C7,4 4,8.5 4,14.7 C4,21 7,25.5 11.5,25.5 C13,25.5 14.5,25 16,24" fill="none" stroke="#111" stroke-width="3.4"/><path d="M1,12.3 H15 M1,16.8 H14" stroke="#111" stroke-width="2.2"/>
 <text x="24" y="18" font-family="Liberation Sans" font-weight="bold" font-style="italic" font-size="9" text-anchor="middle" fill="#fff" letter-spacing="-0.3">Maestro</text>
</svg>
<div class="pb" style="left:845px;top:345px;width:46px;height:34px"></div>
<svg class="a" style="left:846px;top:346px" width="44" height="32" viewBox="0 0 44 32">
 <text x="22" y="20.8" font-family="Liberation Sans" font-weight="bold" font-style="italic" font-size="14.5" text-anchor="middle" fill="#1a4b9a" letter-spacing="-0.5">VISA</text>
 <path d="M7,9.8 L9.6,9.8 L10.3,12.5 Z" fill="#f0a020"/>
</svg>
<div class="pb" style="left:897px;top:345px;width:46px;height:34px;background:#fff"></div>
<svg class="a" style="left:898px;top:346px" width="44" height="32" viewBox="0 0 44 32">
 <defs><linearGradient id="eg" x1="0" y1="0" x2="0" y2="1"><stop offset="0" stop-color="#7fd06a"/><stop offset="0.5" stop-color="#5ec24a"/><stop offset="1" stop-color="#48b038"/></linearGradient></defs>
 <rect x="0.5" y="1.5" width="43" height="29.5" fill="url(#eg)"/>
 <rect x="0.5" y="1.5" width="43" height="1" fill="#2e8a2a"/>
 <text x="22" y="13" font-family="Liberation Sans" font-size="10.5" text-anchor="middle" fill="#1a2a6a">eCheck</text>
 <g fill="#1f4a1f" opacity="0.8"><rect x="4" y="17" width="28" height="0.8"/><rect x="4" y="21" width="34" height="0.8"/><rect x="4" y="25.5" width="36" height="0.8"/></g>
 <rect x="33" y="15.5" width="7" height="3" fill="#d8f0d0"/>
</svg>
<div class="pb" style="left:948px;top:345px;width:46px;height:34px;background:#fff"></div>
<svg class="a" style="left:949px;top:346px" width="44" height="32" viewBox="0 0 44 32">
 <rect x="3" y="0" width="39" height="32" fill="#e9e9e9"/>
 <path d="M5,2 H30 C38,2 41.5,8 41.5,16 C41.5,24 38,30 30,30 H5 Z" fill="#fff" stroke="#333" stroke-width="1.6"/>
 <path d="M16,4.5 H29.5 C36,4.5 38.5,9 38.5,16 C38.5,23 36,27.5 29.5,27.5 H16 Z" fill="#cc0a6e"/>
 <circle cx="9.5" cy="12" r="3" fill="#111"/>
 <rect x="7" y="16.5" width="5" height="10" fill="#111"/>
 <text x="28" y="16.5" font-family="Liberation Sans" font-weight="bold" font-size="7.5" text-anchor="middle" fill="#fff">DEAL</text>
</svg>
<div class="pb" style="left:740px;top:386px;width:48px;height:36px;border:2px solid #ff1010;background:#fff"></div>
<svg class="a" style="left:742px;top:388px" width="44" height="32" viewBox="0 0 44 32">
 <rect x="0" y="1.5" width="44" height="28" fill="#0b2a6f"/>
 <rect x="0" y="29.5" width="44" height="2.5" fill="#f5d0d0"/>
 <circle cx="12.8" cy="16" r="11.2" fill="#1ba0dd"/>
 <circle cx="30.4" cy="16" r="11.2" fill="#e31c30"/>
 <g fill="#1ba0dd"><rect x="19.5" y="8" width="4" height="1"/><rect x="19.5" y="11" width="4.5" height="1"/><rect x="19.5" y="20" width="4.5" height="1"/><rect x="19.5" y="23" width="4" height="1"/></g>
 <text x="22" y="19.5" font-family="Liberation Sans" font-weight="bold" font-style="italic" font-size="10" text-anchor="middle" fill="#fff" letter-spacing="-0.3">Maestro</text>
</svg>
<div class="pb" style="left:793px;top:387px;width:46px;height:34px"></div>
<svg class="a" style="left:794px;top:388px" width="44" height="32" viewBox="0 0 44 32">
 <circle cx="13" cy="16.3" r="10.6" fill="#eb4b2b"/>
 <circle cx="28.8" cy="16.3" r="10.6" fill="#f59c1e"/>
 <text x="21" y="19.5" font-family="Liberation Sans" font-weight="bold" font-style="italic" font-size="7.4" text-anchor="middle" fill="#fff" letter-spacing="-0.5">MasterCard</text>
</svg>
<div class="pb" style="left:845px;top:387px;width:46px;height:34px;background:#fff"></div>
<svg class="a" style="left:846px;top:388px" width="44" height="32" viewBox="0 0 44 32">
 <rect x="0.5" y="0.5" width="43" height="31" fill="#2f72be"/>
 <text x="20" y="14" font-family="Liberation Sans" font-weight="bold" font-size="7" text-anchor="middle" fill="#fff" letter-spacing="-0.3">AMERICAN</text>
 <text x="26" y="23" font-family="Liberation Sans" font-weight="bold" font-size="7" text-anchor="middle" fill="#fff" letter-spacing="-0.3">EXPRESS</text>
</svg>
<div class="pb" style="left:897px;top:387px;width:46px;height:34px"></div>
<svg class="a" style="left:898px;top:388px" width="44" height="32" viewBox="0 0 44 32">
 <rect x="3" y="4" width="38" height="25" fill="#e6e9f0"/>
 <text x="22" y="20.5" font-family="Liberation Sans" font-weight="bold" font-style="italic" font-size="11" text-anchor="middle" fill="#5b70a3" letter-spacing="-0.3">PayPal</text>
</svg>
<div class="pb" style="left:948px;top:387px;width:46px;height:34px"></div>

<svg class="a" style="left:750px;top:643px" width="42" height="38" viewBox="0 0 44 40">
  <rect x="7.5" y="1" width="29" height="8.6" fill="#fff" stroke="#3a76b4" stroke-width="2"/>
  <text x="33.5" y="8" font-family="Liberation Sans" font-weight="bold" font-size="7" text-anchor="end" fill="#111">0,00</text>
  <polygon points="6.8,11.2 37.2,11.2 43.8,28.8 0.4,28.8" fill="#3a76b4"/>
  <rect x="1" y="28.6" width="42.6" height="10.4" rx="3" fill="#fff" stroke="#3a76b4" stroke-width="2"/>
  <g fill="#fff">
   <rect x="16" y="13.8" width="3.6" height="2.2"/><rect x="21" y="13.8" width="3.6" height="2.2"/><rect x="26" y="13.8" width="3.6" height="2.2"/><rect x="31" y="13.8" width="3.4" height="2.2"/>
   <rect x="15.6" y="17" width="3.6" height="2.2"/><rect x="20.6" y="17" width="3.6" height="2.2"/><rect x="25.6" y="17" width="3.6" height="2.2"/><rect x="30.8" y="17" width="3.8" height="2.2"/>
   <rect x="15.2" y="20.2" width="3.6" height="2.2"/><rect x="20.2" y="20.2" width="3.6" height="2.2"/><rect x="25.2" y="20.2" width="3.6" height="2.2"/>
   <rect x="14.8" y="23.4" width="3.6" height="2.6"/><rect x="19.8" y="23.4" width="3.6" height="2.6"/><rect x="24.8" y="23.4" width="3.6" height="2.6"/>
   <polygon points="30.4,20.2 34,20.2 35.2,26 30.2,26"/>
  </g>
 </svg>
<svg class="a" style="left:773px;top:663px" width="26" height="26" viewBox="0 0 26 26">
 <circle cx="13" cy="13" r="12.6" fill="#fff"/>
 <circle cx="13" cy="13" r="11.2" fill="#cf4a2e"/>
 <path d="M8.6,8.6 L17.4,17.4 M17.4,8.6 L8.6,17.4" stroke="#fff" stroke-width="3.2"/>
</svg>
<svg class="a" style="left:826px;top:643px" width="42" height="38" viewBox="0 0 44 40">
  <rect x="7.5" y="1" width="29" height="8.6" fill="#fff" stroke="#3a76b4" stroke-width="2"/>
  <text x="33.5" y="8" font-family="Liberation Sans" font-weight="bold" font-size="7" text-anchor="end" fill="#111">0,00</text>
  <polygon points="6.8,11.2 37.2,11.2 43.8,28.8 0.4,28.8" fill="#3a76b4"/>
  <rect x="1" y="28.6" width="42.6" height="10.4" rx="3" fill="#fff" stroke="#3a76b4" stroke-width="2"/>
  <g fill="#fff">
   <rect x="16" y="13.8" width="3.6" height="2.2"/><rect x="21" y="13.8" width="3.6" height="2.2"/><rect x="26" y="13.8" width="3.6" height="2.2"/><rect x="31" y="13.8" width="3.4" height="2.2"/>
   <rect x="15.6" y="17" width="3.6" height="2.2"/><rect x="20.6" y="17" width="3.6" height="2.2"/><rect x="25.6" y="17" width="3.6" height="2.2"/><rect x="30.8" y="17" width="3.8" height="2.2"/>
   <rect x="15.2" y="20.2" width="3.6" height="2.2"/><rect x="20.2" y="20.2" width="3.6" height="2.2"/><rect x="25.2" y="20.2" width="3.6" height="2.2"/>
   <rect x="14.8" y="23.4" width="3.6" height="2.6"/><rect x="19.8" y="23.4" width="3.6" height="2.6"/><rect x="24.8" y="23.4" width="3.6" height="2.6"/>
   <polygon points="30.4,20.2 34,20.2 35.2,26 30.2,26"/>
  </g>
 </svg>
<svg class="a" style="left:845px;top:654px" width="32" height="34" viewBox="0 0 32 34">
 <circle cx="16" cy="12.5" r="8.5" fill="#fff"/>
 <path d="M2,31.5 C2,24 6,20.5 11,19.5 L21,19.5 C26,20.5 30,24 30,31.5 Z" fill="#fff" stroke="#fff" stroke-width="2.5"/>
 <circle cx="16" cy="12.5" r="6.8" fill="#3a76b4"/>
 <path d="M3.5,31 C3.5,25 7,21.5 11.5,21 Q16,24 20.5,21 C25,21.5 28.5,25 28.5,31 Z" fill="#3a76b4"/>
</svg>
<svg class="a" style="left:920px;top:643px" width="42" height="38" viewBox="0 0 44 40">
  <rect x="7.5" y="1" width="29" height="8.6" fill="#fff" stroke="#3a76b4" stroke-width="2"/>
  <text x="33.5" y="8" font-family="Liberation Sans" font-weight="bold" font-size="7" text-anchor="end" fill="#111">0,00</text>
  <polygon points="6.8,11.2 37.2,11.2 43.8,28.8 0.4,28.8" fill="#3a76b4"/>
  <rect x="1" y="28.6" width="42.6" height="10.4" rx="3" fill="#fff" stroke="#3a76b4" stroke-width="2"/>
  <g fill="#fff">
   <rect x="16" y="13.8" width="3.6" height="2.2"/><rect x="21" y="13.8" width="3.6" height="2.2"/><rect x="26" y="13.8" width="3.6" height="2.2"/><rect x="31" y="13.8" width="3.4" height="2.2"/>
   <rect x="15.6" y="17" width="3.6" height="2.2"/><rect x="20.6" y="17" width="3.6" height="2.2"/><rect x="25.6" y="17" width="3.6" height="2.2"/><rect x="30.8" y="17" width="3.8" height="2.2"/>
   <rect x="15.2" y="20.2" width="3.6" height="2.2"/><rect x="20.2" y="20.2" width="3.6" height="2.2"/><rect x="25.2" y="20.2" width="3.6" height="2.2"/>
   <rect x="14.8" y="23.4" width="3.6" height="2.6"/><rect x="19.8" y="23.4" width="3.6" height="2.6"/><rect x="24.8" y="23.4" width="3.6" height="2.6"/>
   <polygon points="30.4,20.2 34,20.2 35.2,26 30.2,26"/>
  </g>
 </svg>
<svg class="a" style="left:941px;top:661px" width="27" height="27" viewBox="0 0 27 27">
 <circle cx="13.5" cy="13.5" r="13.2" fill="#fff"/>
 <circle cx="13.5" cy="13.5" r="11.8" fill="#4fa57f"/>
 <path d="M7.5,13.5 L11.8,17.8 L19.5,9.8" fill="none" stroke="#fff" stroke-width="3.2"/>
</svg>

</body></html>
